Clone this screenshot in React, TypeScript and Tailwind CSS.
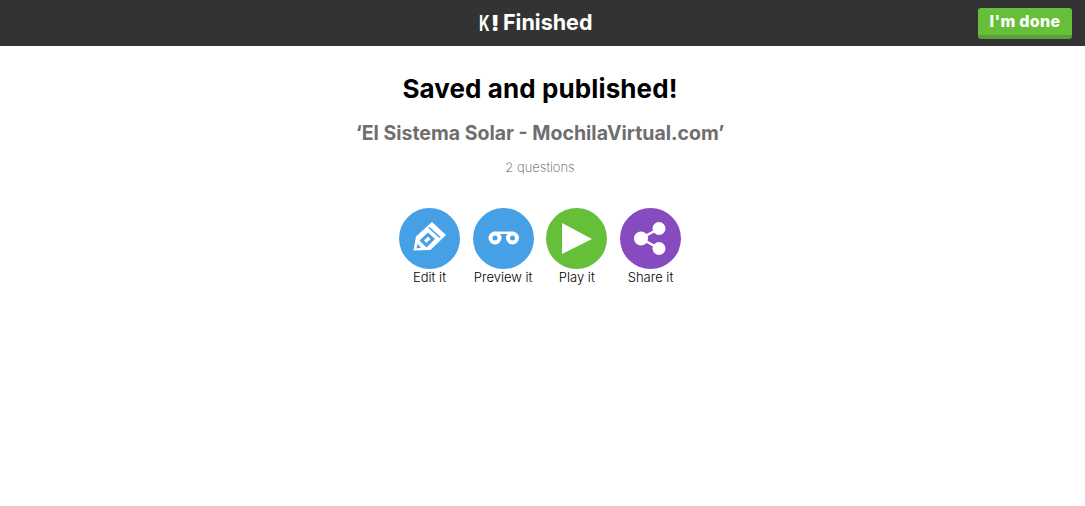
import React from 'react';

const font = { fontFamily: 'Inter, "Open Sans", sans-serif' };

const EditIcon = () => (
  <svg viewBox="0 0 61 61" className="w-[61px] h-[61px]">
    <path fill="#fff" d="M14.5 42.5 L17 28.5 L33 14 L47 27 L31.5 42 Z" />
    <path fill="none" stroke="#46a0e6" strokeWidth="1.6" d="M30 19.5 L41 29.5" />
    <path fill="#46a0e6" d="M20.5 32.5 L29 24.5 L36 31 L27.5 39.5 Z" />
    <path fill="#fff" d="M25 32.5 L29 28.5 L31.5 31 L27.5 35 Z" />
    <path fill="#46a0e6" d="M18.5 36 L22 39.5 L17.5 40.5 Z" />
  </svg>
);

const PreviewIcon = () => (
  <svg viewBox="0 0 61 61" className="w-[61px] h-[61px]">
    <circle cx="22" cy="30" r="4.5" fill="none" stroke="#fff" strokeWidth="4" />
    <circle cx="39.5" cy="30" r="4.5" fill="none" stroke="#fff" strokeWidth="4" />
    <path fill="none" stroke="#fff" strokeWidth="2.5" d="M22 24.8 H39.5" />
  </svg>
);

const PlayIcon = () => (
  <svg viewBox="0 0 61 61" className="w-[61px] h-[61px]">
    <path fill="#fff" d="M16 15 L46 31 L16 46 Z" />
  </svg>
);

const ShareIcon = () => (
  <svg viewBox="0 0 61 61" className="w-[61px] h-[61px]">
    <circle cx="21" cy="30.5" r="7" fill="#fff" />
    <circle cx="39" cy="20.5" r="6.5" fill="#fff" />
    <circle cx="39" cy="40.5" r="6.5" fill="#fff" />
    <path fill="none" stroke="#fff" strokeWidth="2.5" d="M39 20.5 L21 30.5 L39 40.5" />
  </svg>
);

const actions = [
  { label: 'Edit it', bg: 'bg-[#46a0e6]', icon: <EditIcon /> },
  { label: 'Preview it', bg: 'bg-[#46a0e6]', icon: <PreviewIcon /> },
  { label: 'Play it', bg: 'bg-[#66bf39]', icon: <PlayIcon /> },
  { label: 'Share it', bg: 'bg-[#864cbf]', icon: <ShareIcon /> },
];

export default function App() {
  return (
    <div className="min-h-[506px] bg-white" style={font}>
      <header className="h-[46px] bg-[#333333] flex items-center justify-between px-[13px]">
        <div className="w-[80px]" />
        <div className="flex items-center text-white w-[113px]">
          <span className="w-[12px] origin-left scale-x-[0.7] text-[21px] font-bold leading-none">K</span>
          <span className="w-[8px] text-[22px] font-black leading-none">!</span>
          <span className="ml-[4px] text-[21.5px] font-bold leading-none">Finished</span>
        </div>
        <button className="w-[94px] h-[31px] rounded-[3px] bg-[#66bf39] border-b-[4px] border-[#5a9f38] text-white text-[16px] font-extrabold tracking-[0.3px]">
          I'm done
        </button>
      </header>

      <main className="flex flex-col items-center pr-[5px]">
        <h1 className="mt-[27px] text-[26px] leading-[32px] font-bold text-black tracking-[0.1px]">
          Saved and published!
        </h1>
        <h2 className="mt-[16px] text-[19.5px] leading-[24px] font-bold text-[#6e6e6e]">
          ‘El Sistema Solar - MochilaVirtual.com’
        </h2>
        <p className="mt-[12px] text-[13px] leading-[20px] font-extralight text-[#555555]">2 questions</p>

        <div className="mt-[31px] flex gap-[12.67px]">
          {actions.map((a) => (
            <div key={a.label} className="w-[61px] flex flex-col items-center">
              <div className={`w-[61px] h-[61px] rounded-full ${a.bg}`}>{a.icon}</div>
              <span className="whitespace-nowrap text-[13px] leading-[16px] font-light text-black">
                {a.label}
              </span>
            </div>
          ))}
        </div>
      </main>
    </div>
  );
}
